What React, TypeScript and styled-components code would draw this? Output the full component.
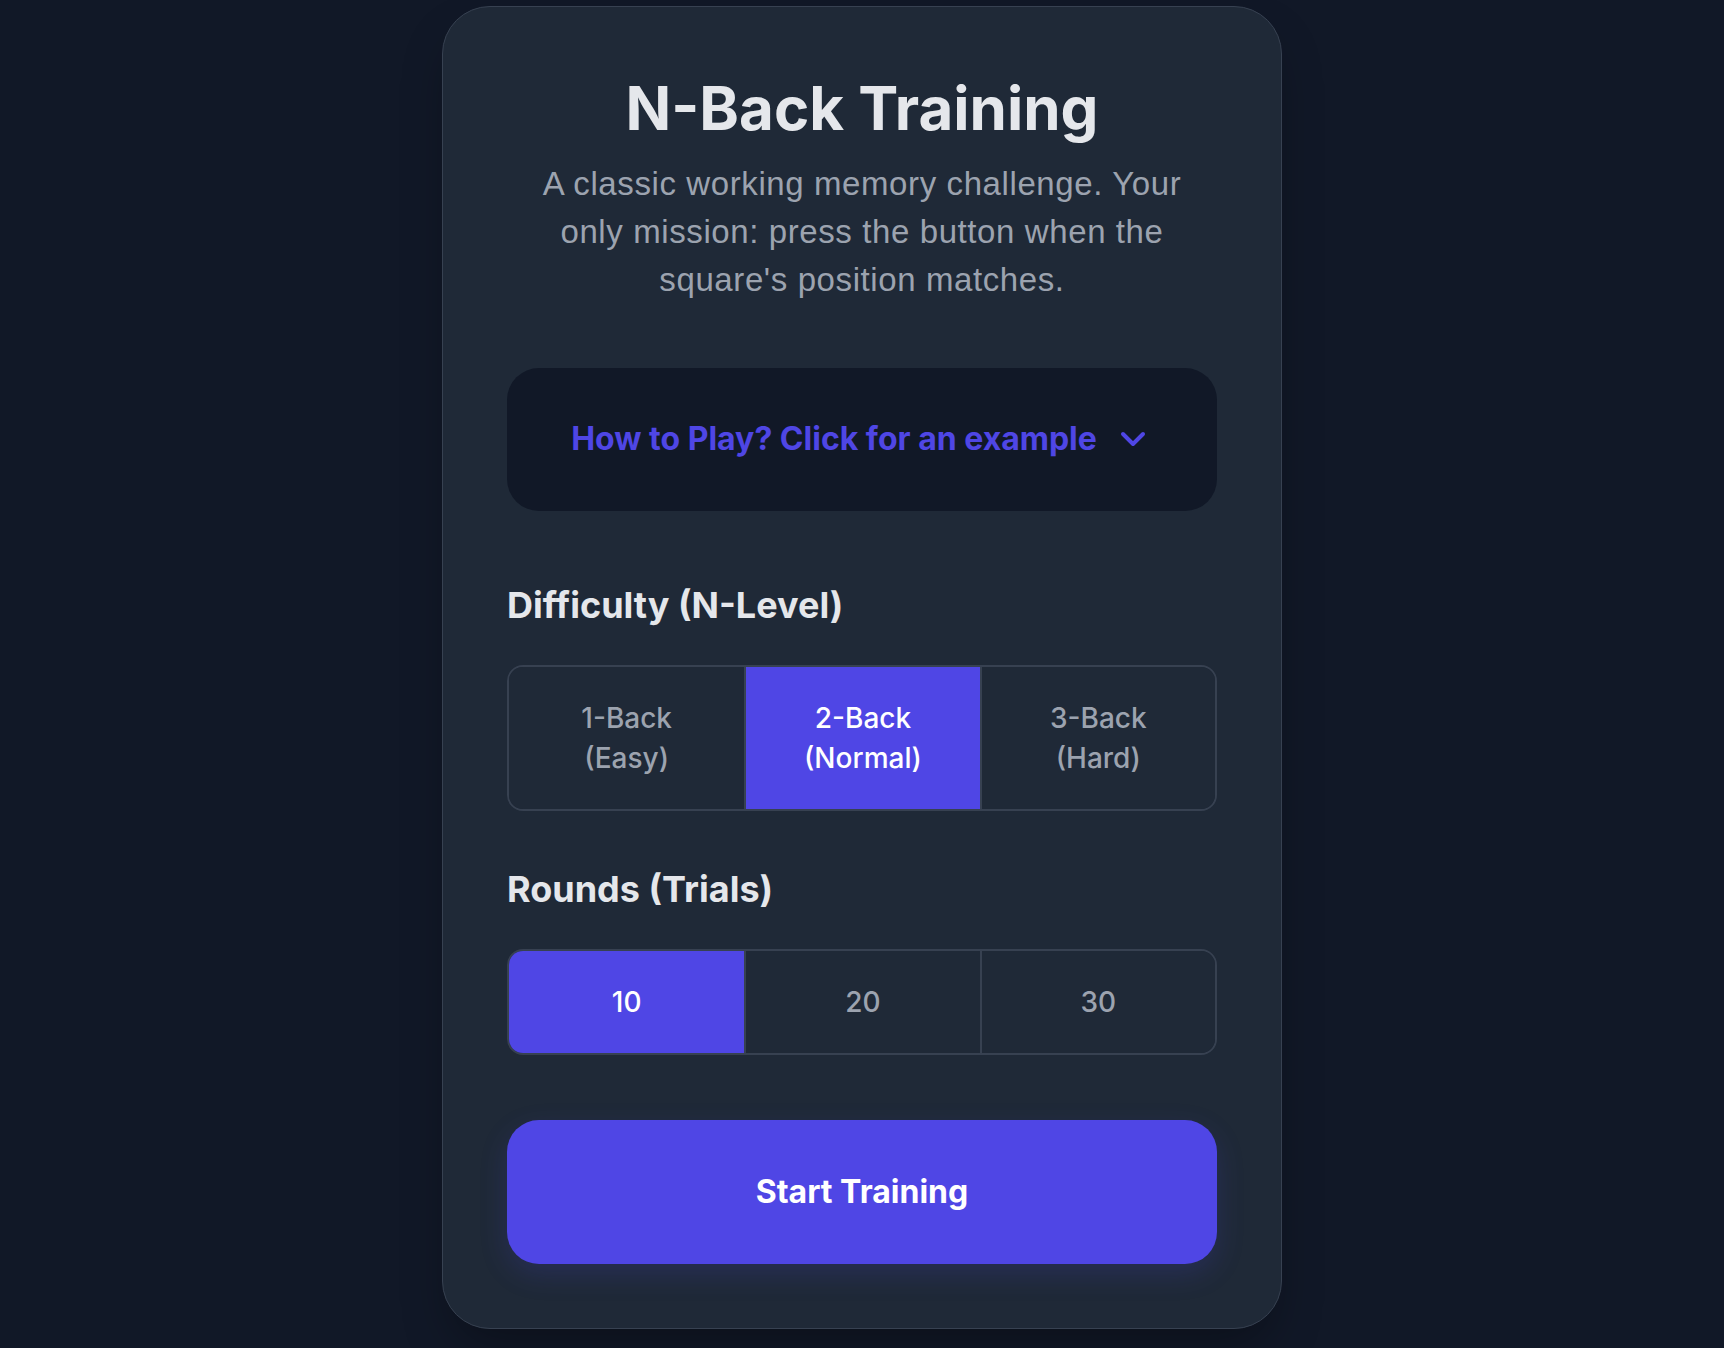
import React, { useState } from "react";
import styled, { createGlobalStyle } from "styled-components";
import { ChevronDown } from "lucide-react";

const GlobalStyle = createGlobalStyle`
  html, body {
    margin: 0;
    padding: 0;
    background: #111827;
  }
  body {
    font-family: Inter, "Noto Sans", sans-serif;
  }
  * { box-sizing: border-box; }
`;

const Page = styled.div`
  min-height: 100vh;
  display: flex;
  justify-content: center;
  align-items: flex-start;
  padding-top: 6px;
  background: #111827;
`;

const Card = styled.div`
  width: 840px;
  background: #1f2937;
  border: 1px solid #374151;
  border-radius: 48px;
  padding: 64px;
  display: flex;
  flex-direction: column;
  box-shadow: 0 25px 50px -12px rgba(0, 0, 0, 0.35);
`;

const Title = styled.h1`
  margin: 0;
  font-family: Inter, sans-serif;
  font-size: 60px;
  line-height: 75px;
  font-weight: 700;
  color: #e5e7eb;
  text-align: center;
`;

const Description = styled.p`
  margin: 14px auto 0;
  max-width: 680px;
  font-family: "Liberation Sans", Arial, sans-serif;
  font-size: 33px;
  letter-spacing: 0.6px;
  line-height: 48px;
  color: #9ca3af;
  text-align: center;
`;

const HowTo = styled.button`
  margin-top: 64px;
  width: 100%;
  border: none;
  background: #111827;
  border-radius: 32px;
  padding: 47px 32px 48px;
  display: flex;
  align-items: center;
  justify-content: center;
  gap: 16px;
  cursor: pointer;
  font-family: Inter, sans-serif;
  font-size: 32px;
  line-height: 48px;
  font-weight: 700;
  color: #4f46e5;
`;

const SectionLabel = styled.h2<{ $top: number }>`
  margin: ${(p) => p.$top}px 0 40px;
  font-family: Inter, sans-serif;
  font-size: 36px;
  line-height: 40px;
  font-weight: 700;
  color: #e5e7eb;
`;

const Segmented = styled.div`
  display: grid;
  grid-template-columns: repeat(3, 1fr);
  border: 2px solid #374151;
  border-radius: 16px;
  overflow: hidden;
`;

const Segment = styled.button<{ $active: boolean }>`
  border: none;
  border-left: 2px solid #374151;
  &:first-child { border-left: none; }
  background: ${(p) => (p.$active ? "#4f46e5" : "#1f2937")};
  color: ${(p) => (p.$active ? "#ffffff" : "#9ca3af")};
  padding: 31px 12px;
  font-family: Inter, sans-serif;
  font-size: 28px;
  line-height: 40px;
  font-weight: 500;
  cursor: pointer;
  display: flex;
  flex-direction: column;
  align-items: center;
  justify-content: center;
`;

const Line = styled.span`
  display: block;
`;

const StartButton = styled.button`
  margin-top: 65px;
  width: 100%;
  border: none;
  border-radius: 32px;
  background: #4f46e5;
  color: #ffffff;
  padding: 48px 0;
  font-family: Inter, sans-serif;
  font-size: 32px;
  line-height: 48px;
  font-weight: 700;
  cursor: pointer;
  box-shadow: 0 10px 28px rgba(79, 70, 229, 0.18);
`;

const levels = [
  { n: 1, name: "1-Back", sub: "(Easy)" },
  { n: 2, name: "2-Back", sub: "(Normal)" },
  { n: 3, name: "3-Back", sub: "(Hard)" },
];

const rounds = [10, 20, 30];

export default function App() {
  const [level, setLevel] = useState(2);
  const [trials, setTrials] = useState(10);

  return (
    <>
      <GlobalStyle />
      <Page>
        <Card>
          <Title>N-Back Training</Title>
          <Description>
            A classic working memory challenge. Your only mission: press the button when the square's position matches.
          </Description>
          <HowTo>
            How to Play? Click for an example
            <ChevronDown size={40} strokeWidth={2.4} />
          </HowTo>

          <SectionLabel $top={74}>Difficulty (N-Level)</SectionLabel>
          <Segmented>
            {levels.map((l) => (
              <Segment key={l.n} $active={level === l.n} onClick={() => setLevel(l.n)}>
                <Line>{l.name}</Line>
                <Line>{l.sub}</Line>
              </Segment>
            ))}
          </Segmented>

          <SectionLabel $top={58}>Rounds (Trials)</SectionLabel>
          <Segmented>
            {rounds.map((r) => (
              <Segment key={r} $active={trials === r} onClick={() => setTrials(r)}>
                <Line>{r}</Line>
              </Segment>
            ))}
          </Segmented>

          <StartButton>Start Training</StartButton>
        </Card>
      </Page>
    </>
  );
}
